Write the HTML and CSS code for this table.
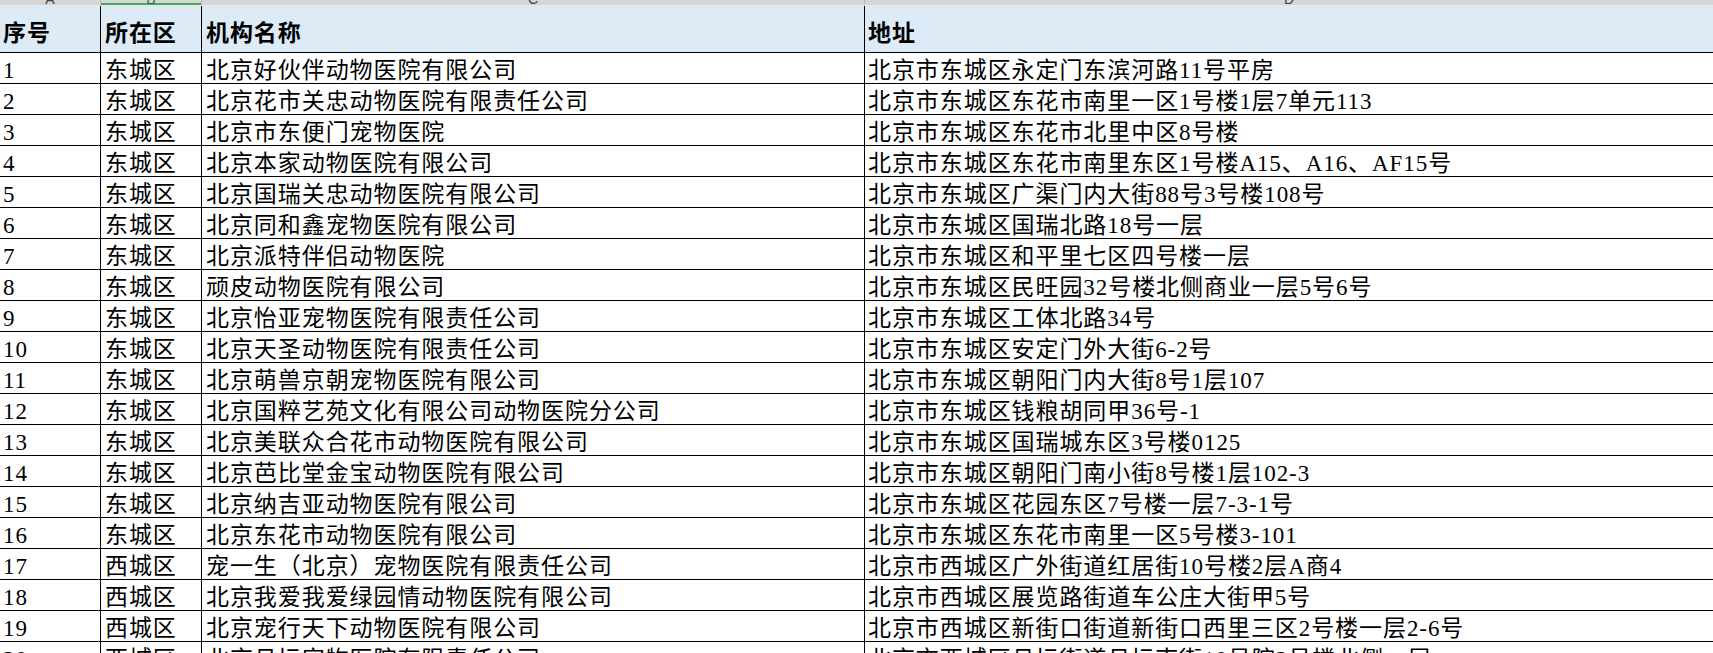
FILE: index.html
```html
<!DOCTYPE html>
<html lang="zh-CN">
<head>
<meta charset="utf-8">
<title>北京动物医院名录</title>
<link rel="stylesheet" href="styles.css">
</head>
<body>
<div class="sheet">
  <div class="colheads" aria-hidden="true">
    <div class="ch"><span>A</span></div>
    <div class="ch sel"><span>B</span></div>
    <div class="ch"><span>C</span></div>
    <div class="ch last"><span>D</span></div>
  </div>
  <div class="row head">
    <div class="c a">序号</div><div class="c b">所在区</div><div class="c cc">机构名称</div><div class="c d">地址</div>
  </div>
  <div class="row"><div class="c a">1</div><div class="c b">东城区</div><div class="c cc">北京好伙伴动物医院有限公司</div><div class="c d">北京市东城区永定门东滨河路11号平房</div></div>
  <div class="row"><div class="c a">2</div><div class="c b">东城区</div><div class="c cc">北京花市关忠动物医院有限责任公司</div><div class="c d">北京市东城区东花市南里一区1号楼1层7单元113</div></div>
  <div class="row"><div class="c a">3</div><div class="c b">东城区</div><div class="c cc">北京市东便门宠物医院</div><div class="c d">北京市东城区东花市北里中区8号楼</div></div>
  <div class="row"><div class="c a">4</div><div class="c b">东城区</div><div class="c cc">北京本家动物医院有限公司</div><div class="c d">北京市东城区东花市南里东区1号楼A15、A16、AF15号</div></div>
  <div class="row"><div class="c a">5</div><div class="c b">东城区</div><div class="c cc">北京国瑞关忠动物医院有限公司</div><div class="c d">北京市东城区广渠门内大街88号3号楼108号</div></div>
  <div class="row"><div class="c a">6</div><div class="c b">东城区</div><div class="c cc">北京同和鑫宠物医院有限公司</div><div class="c d">北京市东城区国瑞北路18号一层</div></div>
  <div class="row"><div class="c a">7</div><div class="c b">东城区</div><div class="c cc">北京派特伴侣动物医院</div><div class="c d">北京市东城区和平里七区四号楼一层</div></div>
  <div class="row"><div class="c a">8</div><div class="c b">东城区</div><div class="c cc">顽皮动物医院有限公司</div><div class="c d">北京市东城区民旺园32号楼北侧商业一层5号6号</div></div>
  <div class="row"><div class="c a">9</div><div class="c b">东城区</div><div class="c cc">北京怡亚宠物医院有限责任公司</div><div class="c d">北京市东城区工体北路34号</div></div>
  <div class="row"><div class="c a">10</div><div class="c b">东城区</div><div class="c cc">北京天圣动物医院有限责任公司</div><div class="c d">北京市东城区安定门外大街6-2号</div></div>
  <div class="row"><div class="c a">11</div><div class="c b">东城区</div><div class="c cc">北京萌兽京朝宠物医院有限公司</div><div class="c d">北京市东城区朝阳门内大街8号1层107</div></div>
  <div class="row"><div class="c a">12</div><div class="c b">东城区</div><div class="c cc">北京国粹艺苑文化有限公司动物医院分公司</div><div class="c d">北京市东城区钱粮胡同甲36号-1</div></div>
  <div class="row"><div class="c a">13</div><div class="c b">东城区</div><div class="c cc">北京美联众合花市动物医院有限公司</div><div class="c d">北京市东城区国瑞城东区3号楼0125</div></div>
  <div class="row"><div class="c a">14</div><div class="c b">东城区</div><div class="c cc">北京芭比堂金宝动物医院有限公司</div><div class="c d">北京市东城区朝阳门南小街8号楼1层102-3</div></div>
  <div class="row"><div class="c a">15</div><div class="c b">东城区</div><div class="c cc">北京纳吉亚动物医院有限公司</div><div class="c d">北京市东城区花园东区7号楼一层7-3-1号</div></div>
  <div class="row"><div class="c a">16</div><div class="c b">东城区</div><div class="c cc">北京东花市动物医院有限公司</div><div class="c d">北京市东城区东花市南里一区5号楼3-101</div></div>
  <div class="row"><div class="c a">17</div><div class="c b">西城区</div><div class="c cc">宠一生（北京）宠物医院有限责任公司</div><div class="c d">北京市西城区广外街道红居街10号楼2层A商4</div></div>
  <div class="row"><div class="c a">18</div><div class="c b">西城区</div><div class="c cc">北京我爱我爱绿园情动物医院有限公司</div><div class="c d">北京市西城区展览路街道车公庄大街甲5号</div></div>
  <div class="row"><div class="c a">19</div><div class="c b">西城区</div><div class="c cc">北京宠行天下动物医院有限公司</div><div class="c d">北京市西城区新街口街道新街口西里三区2号楼一层2-6号</div></div>
  <div class="row"><div class="c a">20</div><div class="c b">西城区</div><div class="c cc">北京月坛宠物医院有限责任公司</div><div class="c d">北京市西城区月坛街道月坛南街10号院2号楼北侧一层</div></div>
</div>
</body>
</html>
```

FILE: styles.css
```css
html, body {
  margin: 0;
  padding: 0;
  overflow: hidden;
  background: #ffffff;
}

.sheet {
  width: 1713px;
  font-family: "Liberation Serif", "Noto Sans CJK SC", serif;
  color: #000;
}

.colheads {
  display: grid;
  grid-template-columns: 101px 101px 663px 1fr;
  height: 5px;
  background: #d6d6d6;
  border-bottom: 1px solid #a9a9a9;
  overflow: hidden;
}

.ch {
  display: flex;
  justify-content: center;
  align-items: flex-end;
  height: 5px;
  overflow: hidden;
  border-right: 1px solid #bdbdbd;
  box-sizing: border-box;
  font-family: "Liberation Sans", sans-serif;
  font-size: 14px;
  color: #444;
}

.ch span {
  line-height: 14px;
  margin-bottom: -1px;
}

.ch.last {
  border-right: none;
}

.ch.sel {
  color: #217346;
  box-shadow: inset 0 -2px 0 #4aa84f;
}

.row {
  display: grid;
  grid-template-columns: 101px 101px 663px 1fr;
  height: 31px;
  border-bottom: 1px solid #000;
  box-sizing: border-box;
}

.row.head {
  height: 48px;
  margin-top: -1px;
  border-top: 1px solid transparent;
  background: #ddebf7;
  font-weight: bold;
}

.c {
  display: flex;
  align-items: flex-end;
  box-sizing: border-box;
  border-right: 1px solid #000;
  font-size: 23px;
  letter-spacing: 0.93px;
  line-height: 24px;
  white-space: nowrap;
  overflow: hidden;
}

.head .c {
  align-items: center;
  padding-top: 10px;
}

.c.a { padding-left: 3px; }
.c.b { padding-left: 4px; }
.c.cc { padding-left: 4px; }
.c.d { padding-left: 3px; border-right: none; }
```
